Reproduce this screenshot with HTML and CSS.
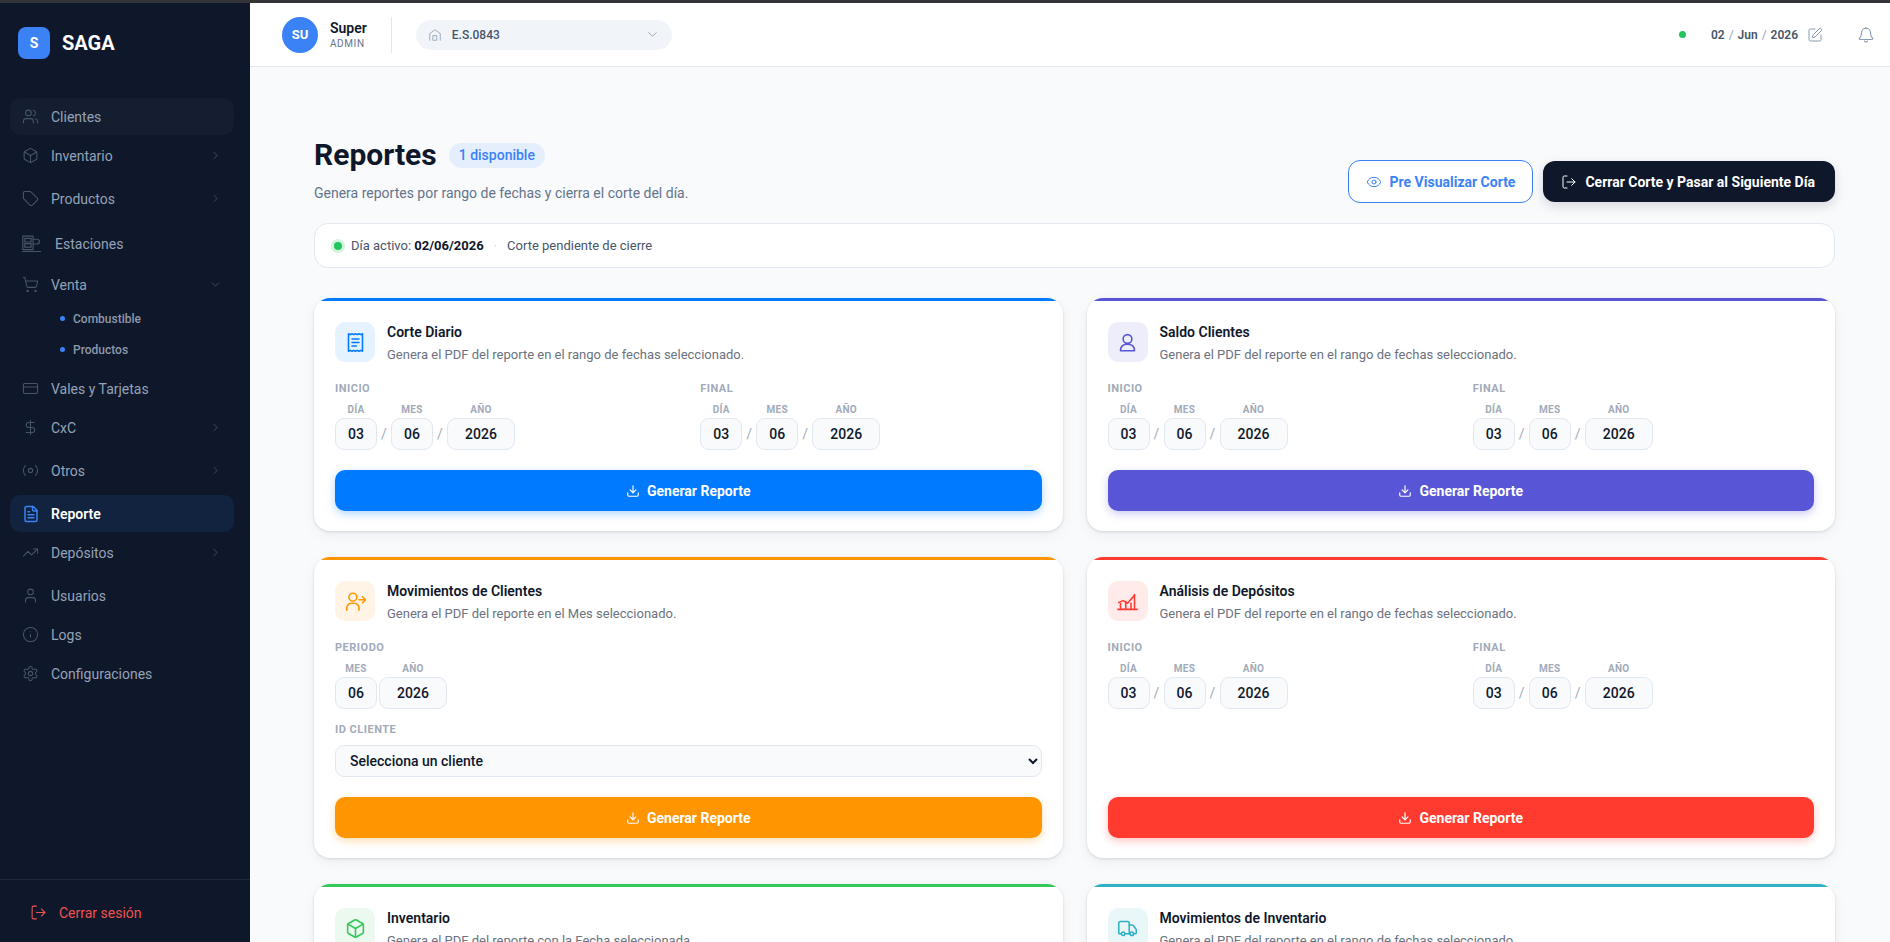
FILE: index.html
```html
<!DOCTYPE html>
<html lang="es">
<head>
  <meta charset="UTF-8" />
  <meta name="viewport" content="width=device-width, initial-scale=1.0"/>
  <title>SAGA – Reportes</title>
  <link rel="stylesheet" href="styles.css">
</head>
<body>

  <svg class="defs" aria-hidden="true">
    <symbol id="i-chev-r" viewBox="0 0 24 24"><path d="m9 18 6-6-6-6"/></symbol>
    <symbol id="i-chev-d" viewBox="0 0 24 24"><path d="m6 9 6 6 6-6"/></symbol>
    <symbol id="i-box" viewBox="0 0 24 24"><path d="M21 8a2 2 0 0 0-1-1.73l-7-4a2 2 0 0 0-2 0l-7 4A2 2 0 0 0 3 8v8a2 2 0 0 0 1 1.73l7 4a2 2 0 0 0 2 0l7-4A2 2 0 0 0 21 16Z"/><path d="m3.3 7 8.7 5 8.7-5"/><path d="M12 22V12"/></symbol>
    <symbol id="i-logout" viewBox="0 0 24 24"><path d="M9 21H5a2 2 0 0 1-2-2V5a2 2 0 0 1 2-2h4"/><path d="m16 17 5-5-5-5"/><path d="M21 12H9"/></symbol>
    <symbol id="i-download" viewBox="0 0 24 24"><path d="M12 15V3"/><path d="M21 15v4a2 2 0 0 1-2 2H5a2 2 0 0 1-2-2v-4"/><path d="m7 10 5 5 5-5"/></symbol>
  </svg>

  <div class="top-strip"></div>

  <div class="app">
    <!-- Sidebar -->
    <aside class="sidebar">
      <div class="brand">
        <span class="brand-logo">S</span>
        <span class="brand-name">SAGA</span>
      </div>

      <nav class="menu">
        <a class="menu-item hover">
          <svg class="ico" viewBox="0 0 24 24"><path d="M16 21v-2a4 4 0 0 0-4-4H6a4 4 0 0 0-4 4v2"/><circle cx="9" cy="7" r="4"/><path d="M22 21v-2a4 4 0 0 0-3-3.87"/><path d="M16 3.13a4 4 0 0 1 0 7.75"/></svg>
          Clientes
        </a>
        <div class="menu-group">
          <a class="menu-item">
            <svg class="ico"><use href="#i-box"/></svg>
            Inventario
            <svg class="chev"><use href="#i-chev-r"/></svg>
          </a>
        </div>
        <div class="menu-group">
          <a class="menu-item">
            <svg class="ico" viewBox="0 0 24 24"><path d="M12.586 2.586A2 2 0 0 0 11.172 2H4a2 2 0 0 0-2 2v7.172a2 2 0 0 0 .586 1.414l8.704 8.704a2.426 2.426 0 0 0 3.42 0l6.58-6.58a2.426 2.426 0 0 0 0-3.42z"/></svg>
            Productos
            <svg class="chev"><use href="#i-chev-r"/></svg>
          </a>
        </div>
        <a class="menu-item tall">
          <svg class="ico wide" viewBox="0 0 24 22"><rect x="1" y="1" width="13" height="17"/><rect x="3.5" y="4" width="8" height="4.5"/><rect x="3.5" y="10.5" width="8" height="4.5"/><path d="M14 5h5a2.5 2.5 0 0 1 0 6h-5"/><path d="M1 20.5h23"/></svg>
          Estaciones
        </a>
        <div class="menu-group">
          <a class="menu-item">
            <svg class="ico" viewBox="0 0 24 24"><circle cx="8" cy="21" r="1"/><circle cx="19" cy="21" r="1"/><path d="M2.05 2.05h2l2.66 12.42a2 2 0 0 0 2 1.58h9.78a2 2 0 0 0 1.95-1.57l1.65-7.43H5.12"/></svg>
            Venta
            <svg class="chev"><use href="#i-chev-d"/></svg>
          </a>
          <div class="submenu">
            <a class="sub-item">Combustible</a>
            <a class="sub-item">Productos</a>
          </div>
        </div>
        <a class="menu-item">
          <svg class="ico" viewBox="0 0 24 24"><rect width="20" height="14" x="2" y="5" rx="2"/><path d="M2 10h20"/></svg>
          Vales y Tarjetas
        </a>
        <div class="menu-group">
          <a class="menu-item">
            <svg class="ico" viewBox="0 0 24 24"><path d="M12 2v20"/><path d="M17 5H9.5a3.5 3.5 0 0 0 0 7h5a3.5 3.5 0 0 1 0 7H6"/></svg>
            CxC
            <svg class="chev"><use href="#i-chev-r"/></svg>
          </a>
        </div>
        <div class="menu-group">
          <a class="menu-item">
            <svg class="ico" viewBox="0 0 24 24"><path d="M4.9 19.1C1 15.2 1 8.8 4.9 4.9"/><circle cx="12" cy="12" r="3"/><path d="M19.1 4.9C23 8.8 23 15.1 19.1 19"/></svg>
            Otros
            <svg class="chev"><use href="#i-chev-r"/></svg>
          </a>
        </div>
        <a class="menu-item active">
          <svg class="ico" viewBox="0 0 24 24"><path d="M15 2H6a2 2 0 0 0-2 2v16a2 2 0 0 0 2 2h12a2 2 0 0 0 2-2V7Z"/><path d="M14 2v4a2 2 0 0 0 2 2h4"/><path d="M10 9H8"/><path d="M16 13H8"/><path d="M16 17H8"/></svg>
          Reporte
        </a>
        <div class="menu-group">
          <a class="menu-item">
            <svg class="ico" viewBox="0 0 24 24"><path d="m22 7-8.500 8.500-5-5L2 17"/><path d="M16 7h6v6"/></svg>
            Depósitos
            <svg class="chev"><use href="#i-chev-r"/></svg>
          </a>
        </div>
        <a class="menu-item">
          <svg class="ico" viewBox="0 0 24 24"><path d="M19 21v-2a4 4 0 0 0-4-4H9a4 4 0 0 0-4 4v2"/><circle cx="12" cy="7" r="4"/></svg>
          Usuarios
        </a>
        <a class="menu-item">
          <svg class="ico" viewBox="0 0 24 24"><circle cx="12" cy="12" r="10"/><path d="M12 16v-4"/><path d="M12 8h.01"/></svg>
          Logs
        </a>
        <a class="menu-item">
          <svg class="ico" viewBox="0 0 24 24"><path d="M12.220 2h-.44a2 2 0 0 0-2 2v.18a2 2 0 0 1-1 1.730l-.43.25a2 2 0 0 1-2 0l-.15-.08a2 2 0 0 0-2.730.73l-.22.38a2 2 0 0 0 .73 2.730l.15.1a2 2 0 0 1 1 1.720v.51a2 2 0 0 1-1 1.740l-.15.09a2 2 0 0 0-.73 2.730l.22.38a2 2 0 0 0 2.730.73l.15-.08a2 2 0 0 1 2 0l.43.25a2 2 0 0 1 1 1.730V20a2 2 0 0 0 2 2h.44a2 2 0 0 0 2-2v-.18a2 2 0 0 1 1-1.730l.43-.25a2 2 0 0 1 2 0l.15.08a2 2 0 0 0 2.730-.73l.22-.39a2 2 0 0 0-.73-2.730l-.15-.08a2 2 0 0 1-1-1.740v-.5a2 2 0 0 1 1-1.740l.15-.09a2 2 0 0 0 .73-2.730l-.22-.38a2 2 0 0 0-2.730-.73l-.15.08a2 2 0 0 1-2 0l-.43-.25a2 2 0 0 1-1-1.730V4a2 2 0 0 0-2-2z"/><circle cx="12" cy="12" r="3"/></svg>
          Configuraciones
        </a>
      </nav>

      <div class="sidebar-foot">
        <a class="logout">
          <svg class="ico"><use href="#i-logout"/></svg>
          Cerrar sesión
        </a>
      </div>
    </aside>

    <div class="content">
      <!-- Header -->
      <header class="topbar">
        <div class="user">
          <span class="avatar">SU</span>
          <div class="user-text">
            <strong>Super</strong>
            <small>ADMIN</small>
          </div>
        </div>
        <div class="station">
          <svg class="station-ico" viewBox="0 0 24 24"><path d="M3 21V9.500L12 3l9 6.500V21"/><rect x="9" y="13" width="6" height="8"/></svg>
          <span>E.S.0843</span>
          <svg class="station-chev"><use href="#i-chev-d"/></svg>
        </div>
        <div class="topbar-right">
          <span class="status-dot"></span>
          <span class="date">02 <i>/</i> Jun <i>/</i> 2026</span>
          <svg class="edit-ico" viewBox="0 0 24 24"><path d="M12 3H5a2 2 0 0 0-2 2v14a2 2 0 0 0 2 2h14a2 2 0 0 0 2-2v-7"/><path d="M18.375 2.625a1 1 0 0 1 3 3l-9.013 9.014a2 2 0 0 1-.853.505l-2.873.84a.5.5 0 0 1-.62-.62l.84-2.873a2 2 0 0 1 .506-.852z"/></svg>
          <svg class="bell-ico" viewBox="0 0 24 24"><path d="M10 20a2.200 2.200 0 0 0 4 0"/><path d="M3.262 16.326A1 1 0 0 0 4 18h16a1 1 0 0 0 .74-1.673C19.410 14.956 18 13.499 18 9A6 6 0 0 0 6 9c0 4.499-1.411 5.956-2.738 7.326"/><path d="M12 3V2"/></svg>
        </div>
      </header>

      <main class="page">
        <div class="page-head">
          <div>
            <div class="title-row">
              <h1>Reportes</h1>
              <span class="badge">1 disponible</span>
            </div>
            <p class="subtitle">Genera reportes por rango de fechas y cierra el corte del día.</p>
          </div>
          <div class="head-actions">
            <button class="btn-outline">
              <svg viewBox="0 0 24 24"><path d="M2.062 12.348a1 1 0 0 1 0-.696 10.750 10.750 0 0 1 19.876 0 1 1 0 0 1 0 .696 10.750 10.750 0 0 1-19.876 0"/><circle cx="12" cy="12" r="3"/></svg>
              Pre Visualizar Corte
            </button>
            <button class="btn-dark">
              <svg><use href="#i-logout"/></svg>
              Cerrar Corte y Pasar al Siguiente Día
            </button>
          </div>
        </div>

        <div class="notice">
          <span class="notice-dot"></span>
          <span>Día activo: <b>02/06/2026</b></span>
          <span class="notice-sep">·</span>
          <span>Corte pendiente de cierre</span>
        </div>

        <div class="report-grid">

          <section class="card blue">
            <div class="card-head">
              <span class="card-ico"><svg viewBox="0 0 24 24"><path d="M4 2v20l2-1 2 1 2-1 2 1 2-1 2 1 2-1 2 1V2l-2 1-2-1-2 1-2-1-2 1-2-1-2 1Z"/><path d="M8 8h8"/><path d="M8 12h8"/><path d="M8 16h5"/></svg></span>
              <div>
                <h3>Corte Diario</h3>
                <p>Genera el PDF del reporte en el rango de fechas seleccionado.</p>
              </div>
            </div>
            <div class="range">
              <div>
                <div class="field-label">INICIO</div>
                <div class="date-row">
                  <label class="part"><span>DÍA</span><input value="03"></label><i>/</i>
                  <label class="part"><span>MES</span><input value="06"></label><i>/</i>
                  <label class="part year"><span>AÑO</span><input value="2026"></label>
                </div>
              </div>
              <div>
                <div class="field-label">FINAL</div>
                <div class="date-row">
                  <label class="part"><span>DÍA</span><input value="03"></label><i>/</i>
                  <label class="part"><span>MES</span><input value="06"></label><i>/</i>
                  <label class="part year"><span>AÑO</span><input value="2026"></label>
                </div>
              </div>
            </div>
            <button class="btn-generate"><svg><use href="#i-download"/></svg>Generar Reporte</button>
          </section>

          <section class="card indigo">
            <div class="card-head">
              <span class="card-ico"><svg viewBox="0 0 24 24"><circle cx="12" cy="8" r="5"/><path d="M4 21.500c0-4.500 3-7.500 8-7.500s8 3 8 7.500z"/></svg></span>
              <div>
                <h3>Saldo Clientes</h3>
                <p>Genera el PDF del reporte en el rango de fechas seleccionado.</p>
              </div>
            </div>
            <div class="range">
              <div>
                <div class="field-label">INICIO</div>
                <div class="date-row">
                  <label class="part"><span>DÍA</span><input value="03"></label><i>/</i>
                  <label class="part"><span>MES</span><input value="06"></label><i>/</i>
                  <label class="part year"><span>AÑO</span><input value="2026"></label>
                </div>
              </div>
              <div>
                <div class="field-label">FINAL</div>
                <div class="date-row">
                  <label class="part"><span>DÍA</span><input value="03"></label><i>/</i>
                  <label class="part"><span>MES</span><input value="06"></label><i>/</i>
                  <label class="part year"><span>AÑO</span><input value="2026"></label>
                </div>
              </div>
            </div>
            <button class="btn-generate"><svg><use href="#i-download"/></svg>Generar Reporte</button>
          </section>

          <section class="card orange">
            <div class="card-head">
              <span class="card-ico"><svg viewBox="0 0 24 24"><circle cx="9" cy="7" r="4.500"/><path d="M2 22v-2.500A5.500 5.500 0 0 1 7.500 14h3a5.500 5.500 0 0 1 5.500 5.500V22"/><path d="M16 10h7"/><path d="m20 6.500 3.500 3.500-3.500 3.500"/></svg></span>
              <div>
                <h3>Movimientos de Clientes</h3>
                <p>Genera el PDF del reporte en el Mes seleccionado.</p>
              </div>
            </div>
            <div class="range single">
              <div>
                <div class="field-label">PERIODO</div>
                <div class="date-row tight">
                  <label class="part"><span>MES</span><input value="06"></label>
                  <label class="part year"><span>AÑO</span><input value="2026"></label>
                </div>
              </div>
            </div>
            <div class="field-label client-label">ID CLIENTE</div>
            <select class="client-select">
              <option>Selecciona un cliente</option>
            </select>
            <button class="btn-generate"><svg><use href="#i-download"/></svg>Generar Reporte</button>
          </section>

          <section class="card red">
            <div class="card-head">
              <span class="card-ico"><svg viewBox="0 0 24 24"><path d="M1 21h22"/><path d="M4 21v-7"/><path d="M10 21v-9"/><path d="M16 21v-7"/><path d="M20 21V4"/><path d="M2 13l5-2 5 3 8-9"/></svg></span>
              <div>
                <h3>Análisis de Depósitos</h3>
                <p>Genera el PDF del reporte en el rango de fechas seleccionado.</p>
              </div>
            </div>
            <div class="range">
              <div>
                <div class="field-label">INICIO</div>
                <div class="date-row">
                  <label class="part"><span>DÍA</span><input value="03"></label><i>/</i>
                  <label class="part"><span>MES</span><input value="06"></label><i>/</i>
                  <label class="part year"><span>AÑO</span><input value="2026"></label>
                </div>
              </div>
              <div>
                <div class="field-label">FINAL</div>
                <div class="date-row">
                  <label class="part"><span>DÍA</span><input value="03"></label><i>/</i>
                  <label class="part"><span>MES</span><input value="06"></label><i>/</i>
                  <label class="part year"><span>AÑO</span><input value="2026"></label>
                </div>
              </div>
            </div>
            <button class="btn-generate"><svg><use href="#i-download"/></svg>Generar Reporte</button>
          </section>

          <section class="card green">
            <div class="card-head">
              <span class="card-ico"><svg><use href="#i-box"/></svg></span>
              <div>
                <h3>Inventario</h3>
                <p>Genera el PDF del reporte con la Fecha seleccionada.</p>
              </div>
            </div>
          </section>

          <section class="card cyan">
            <div class="card-head">
              <span class="card-ico"><svg viewBox="0 0 24 24"><path d="M14 18V6a2 2 0 0 0-2-2H4a2 2 0 0 0-2 2v11a1 1 0 0 0 1 1h2"/><path d="M15 18H9"/><path d="M19 18h2a1 1 0 0 0 1-1v-3.650a1 1 0 0 0-.22-.624l-3.480-4.350A1 1 0 0 0 17.520 8H14"/><circle cx="17" cy="18" r="2"/><circle cx="7" cy="18" r="2"/></svg></span>
              <div>
                <h3>Movimientos de Inventario</h3>
                <p>Genera el PDF del reporte en el rango de fechas seleccionado.</p>
              </div>
            </div>
          </section>

        </div>
      </main>
    </div>
  </div>

</body>
</html>
```

FILE: styles.css
```css
:root {
  --navy: #0f172a;
  --slate: #94a3b8;
  --line: #e2e8f0;
  --bg: #f8fafc;
  --accent: #3b82f6;
}

* {
  box-sizing: border-box;
}

html, body {
  height: 100%;
}

body {
  margin: 0;
  overflow: hidden;
  background: var(--bg);
  color: var(--navy);
  font-family: Roboto, "Liberation Sans", sans-serif;
}

svg {
  fill: none;
  stroke: currentColor;
  stroke-width: 1.5;
  stroke-linecap: round;
  stroke-linejoin: round;
  flex-shrink: 0;
}

.defs {
  display: none;
}

.top-strip {
  height: 3px;
  background: #333438;
}

.app {
  display: flex;
  height: calc(100vh - 3px);
}

/* Sidebar */
.sidebar {
  width: 250px;
  flex-shrink: 0;
  display: flex;
  flex-direction: column;
  background: var(--navy);
}

.brand {
  display: flex;
  align-items: center;
  gap: 12px;
  padding: 24px 18px 0;
}

.brand-logo {
  width: 32px;
  height: 32px;
  display: flex;
  align-items: center;
  justify-content: center;
  border-radius: 8px;
  background: var(--accent);
  color: #fff;
  font-size: 14px;
  font-weight: 700;
}

.brand-name {
  color: #fff;
  font-size: 20px;
  font-weight: 700;
}

.menu {
  flex: 1;
  display: flex;
  flex-direction: column;
  gap: 2px;
  margin-top: 39px;
  padding: 0 16px 0 10px;
}

.menu-item {
  height: 37px;
  display: flex;
  align-items: center;
  gap: 12px;
  padding: 0 12px;
  border-radius: 10px;
  color: var(--slate);
  font-size: 14px;
}

.menu-item .ico {
  width: 17px;
  height: 17px;
  color: #475569;
}

.menu-item .wide {
  width: 19px;
  height: 18px;
  margin-right: 2px;
}

.menu-item.tall {
  height: 41px;
}

.menu-item.hover {
  background: #151e31;
}

.menu-item.active {
  background: #12233f;
  color: #fff;
  font-weight: 600;
}

.menu-item.active .ico {
  width: 18px;
  height: 18px;
  margin-right: -1px;
  color: var(--accent);
  stroke-width: 2;
}

.chev {
  width: 13px;
  height: 13px;
  margin-left: auto;
  color: #475569;
}

.menu-group {
  margin-bottom: 4px;
}

.submenu {
  display: flex;
  flex-direction: column;
  gap: 4px;
  margin: 2px 0 1px;
}

.sub-item {
  height: 27px;
  display: flex;
  align-items: center;
  gap: 8px;
  padding-left: 50px;
  color: #8d99ab;
  font-size: 12px;
  font-weight: 500;
}

.sub-item::before {
  content: "";
  width: 5px;
  height: 5px;
  border-radius: 50%;
  background: var(--accent);
}

.sidebar-foot {
  height: 63px;
  border-top: 1px solid #1e293b;
  padding: 24px 0 0 30px;
}

.logout {
  display: flex;
  align-items: center;
  gap: 12px;
  color: #ef5350;
  font-size: 14px;
}

.logout .ico {
  width: 17px;
  height: 17px;
}

/* Header */
.content {
  flex: 1;
  min-width: 0;
  display: flex;
  flex-direction: column;
}

.topbar {
  height: 64px;
  flex-shrink: 0;
  display: flex;
  align-items: center;
  padding: 0 15px 0 32px;
  background: #fff;
  border-bottom: 1px solid var(--line);
}

.user {
  display: flex;
  align-items: center;
  gap: 12px;
  height: 36px;
  padding-right: 24px;
  border-right: 1px solid var(--line);
}

.avatar {
  width: 36px;
  height: 36px;
  display: flex;
  align-items: center;
  justify-content: center;
  border-radius: 50%;
  background: var(--accent);
  color: #fff;
  font-size: 13px;
  font-weight: 700;
}

.user-text strong {
  display: block;
  font-size: 14px;
  font-weight: 600;
  line-height: 16px;
}

.user-text small {
  display: block;
  color: #64748b;
  font-size: 10px;
  letter-spacing: 0.6px;
  line-height: 12px;
  margin-top: 2px;
}

.station {
  width: 256px;
  height: 30px;
  display: flex;
  align-items: center;
  gap: 10px;
  margin-left: 24px;
  padding: 0 12px;
  border-radius: 15px;
  background: #f1f5f9;
  color: #475569;
  font-size: 12px;
  font-weight: 500;
}

.station-ico {
  width: 14px;
  height: 14px;
  color: var(--slate);
}

.station-chev {
  width: 15px;
  height: 15px;
  margin-left: auto;
  color: var(--slate);
}

.topbar-right {
  display: flex;
  align-items: center;
  margin-left: auto;
}

.status-dot {
  width: 7px;
  height: 7px;
  border-radius: 50%;
  background: #22c55e;
}

.date {
  margin-left: 25px;
  color: #475569;
  font-size: 12px;
  font-weight: 600;
  word-spacing: 1px;
}

.date i {
  color: var(--slate);
  font-style: normal;
  font-weight: 400;
}

.edit-ico {
  width: 16px;
  height: 16px;
  margin-left: 9px;
  color: #8a9ab0;
}

.bell-ico {
  width: 18px;
  height: 18px;
  margin-left: 34px;
  color: #8a9ab0;
}

/* Page */
.page {
  flex: 1;
  padding: 70px 55px 0 64px;
}

.page-head {
  display: flex;
  justify-content: space-between;
  align-items: flex-end;
}

.title-row {
  display: flex;
  align-items: center;
  gap: 12px;
}

h1 {
  margin: 0;
  font-size: 30px;
  font-weight: 700;
  line-height: 36px;
}

.badge {
  height: 25px;
  display: flex;
  align-items: center;
  padding: 0 10px;
  border-radius: 13px;
  background: #e4eefd;
  color: var(--accent);
  font-size: 14px;
  font-weight: 500;
}

.subtitle {
  margin: 10px 0 0;
  color: #64748b;
  font-size: 14px;
  line-height: 20px;
}

.head-actions {
  display: flex;
  align-items: center;
  gap: 10px;
}

.head-actions button {
  display: flex;
  align-items: center;
  gap: 8px;
  border-radius: 12px;
  font-family: inherit;
  font-size: 14px;
  font-weight: 700;
}

.head-actions svg {
  width: 16px;
  height: 16px;
}

.btn-outline {
  height: 43px;
  padding: 0 17px;
  background: #fff;
  border: 1px solid var(--accent);
  color: var(--accent);
}

.btn-dark {
  height: 41px;
  padding: 0 20px 0 18px;
  background: var(--navy);
  border: none;
  color: #fff;
  box-shadow: 0 4px 12px rgba(15, 23, 42, 0.15);
}

.notice {
  height: 45px;
  display: flex;
  align-items: center;
  gap: 10px;
  margin-top: 20px;
  padding: 0 16px;
  background: #fff;
  border: 1px solid var(--line);
  border-radius: 14px;
  color: #475569;
  font-size: 13px;
}

.notice b {
  color: var(--navy);
  font-weight: 700;
}

.notice-dot {
  width: 8px;
  height: 8px;
  margin: 0 -1px 0 3px;
  border-radius: 50%;
  background: #22c55e;
  box-shadow: 0 0 0 3px #d3f3df;
}

.notice-sep {
  color: #cbd5e1;
}

.report-grid {
  display: grid;
  grid-template-columns: 1fr 1fr;
  gap: 26px 24px;
  margin-top: 30px;
}

/* Cards */
.card {
  display: flex;
  flex-direction: column;
  overflow: hidden;
  padding: 0 21px 20px;
  background: #fff;
  border-radius: 16px;
  box-shadow: 0 1px 3px rgba(15, 23, 42, 0.12), 0 4px 14px rgba(15, 23, 42, 0.05);
}

.card::before {
  content: "";
  height: 3px;
  flex-shrink: 0;
  margin: 0 -21px 21px;
  background: var(--c);
}

.blue { --c: #007aff; --tint: #e5f2ff; }
.indigo { --c: #5856d6; --tint: #eeeefb; }
.orange { --c: #ff9500; --tint: #fff4e5; }
.red { --c: #ff3b30; --tint: #ffebea; }
.green { --c: #34c759; --tint: #ebf9ee; }
.cyan { --c: #30b0c7; --tint: #eaf7f9; }

.card-head {
  display: flex;
  gap: 12px;
}

.card-ico {
  width: 40px;
  height: 40px;
  flex-shrink: 0;
  display: flex;
  align-items: center;
  justify-content: center;
  border-radius: 10px;
  background: var(--tint);
  color: var(--c);
}

.card-ico svg {
  width: 21px;
  height: 21px;
  stroke-width: 1.8;
}

.card-head h3 {
  margin: 0;
  padding-top: 1.5px;
  font-size: 14px;
  font-weight: 600;
  line-height: 17px;
}

.card-head p {
  margin: 6px 0 0;
  color: #6b7280;
  font-size: 13px;
  line-height: 15px;
}

.range {
  display: grid;
  grid-template-columns: 1fr 1fr;
  gap: 24px;
  margin: 21px 0 20px;
}

.range.single {
  margin-bottom: 15px;
}

.field-label {
  color: #a2abb9;
  font-size: 11px;
  font-weight: 700;
  letter-spacing: 0.5px;
  line-height: 12px;
}

.date-row {
  display: flex;
  align-items: flex-end;
  margin-top: 9px;
}

.date-row i {
  width: 14px;
  height: 32px;
  color: #a2abb9;
  font-size: 14px;
  font-style: normal;
  line-height: 32px;
  text-align: center;
}

.date-row.tight {
  gap: 2px;
}

.part {
  width: 42px;
  display: flex;
  flex-direction: column;
  align-items: center;
  gap: 2px;
}

.part.year {
  width: 68px;
}

.part span {
  color: #a2abb9;
  font-size: 10px;
  font-weight: 700;
  letter-spacing: 0.3px;
  line-height: 12px;
}

.part input {
  width: 100%;
  height: 32px;
  padding: 0;
  background: var(--bg);
  border: 1px solid var(--line);
  border-radius: 9px;
  color: var(--navy);
  font-family: inherit;
  font-size: 14px;
  font-weight: 500;
  text-align: center;
}

.client-select {
  width: 100%;
  height: 32px;
  margin: 9px 0 20px;
  padding: 0 10px;
  background: var(--bg);
  border: 1px solid var(--line);
  border-radius: 9px;
  color: var(--navy);
  font-family: inherit;
  font-size: 14px;
  font-weight: 500;
}

.btn-generate {
  height: 41px;
  flex-shrink: 0;
  display: flex;
  align-items: center;
  justify-content: center;
  gap: 7px;
  margin-top: auto;
  background: var(--c);
  border: none;
  border-radius: 10px;
  color: #fff;
  font-family: inherit;
  font-size: 14px;
  font-weight: 700;
  box-shadow: 0 3px 8px color-mix(in srgb, var(--c) 30%, transparent);
}

.btn-generate svg {
  width: 14px;
  height: 14px;
  stroke-width: 2;
}
```
